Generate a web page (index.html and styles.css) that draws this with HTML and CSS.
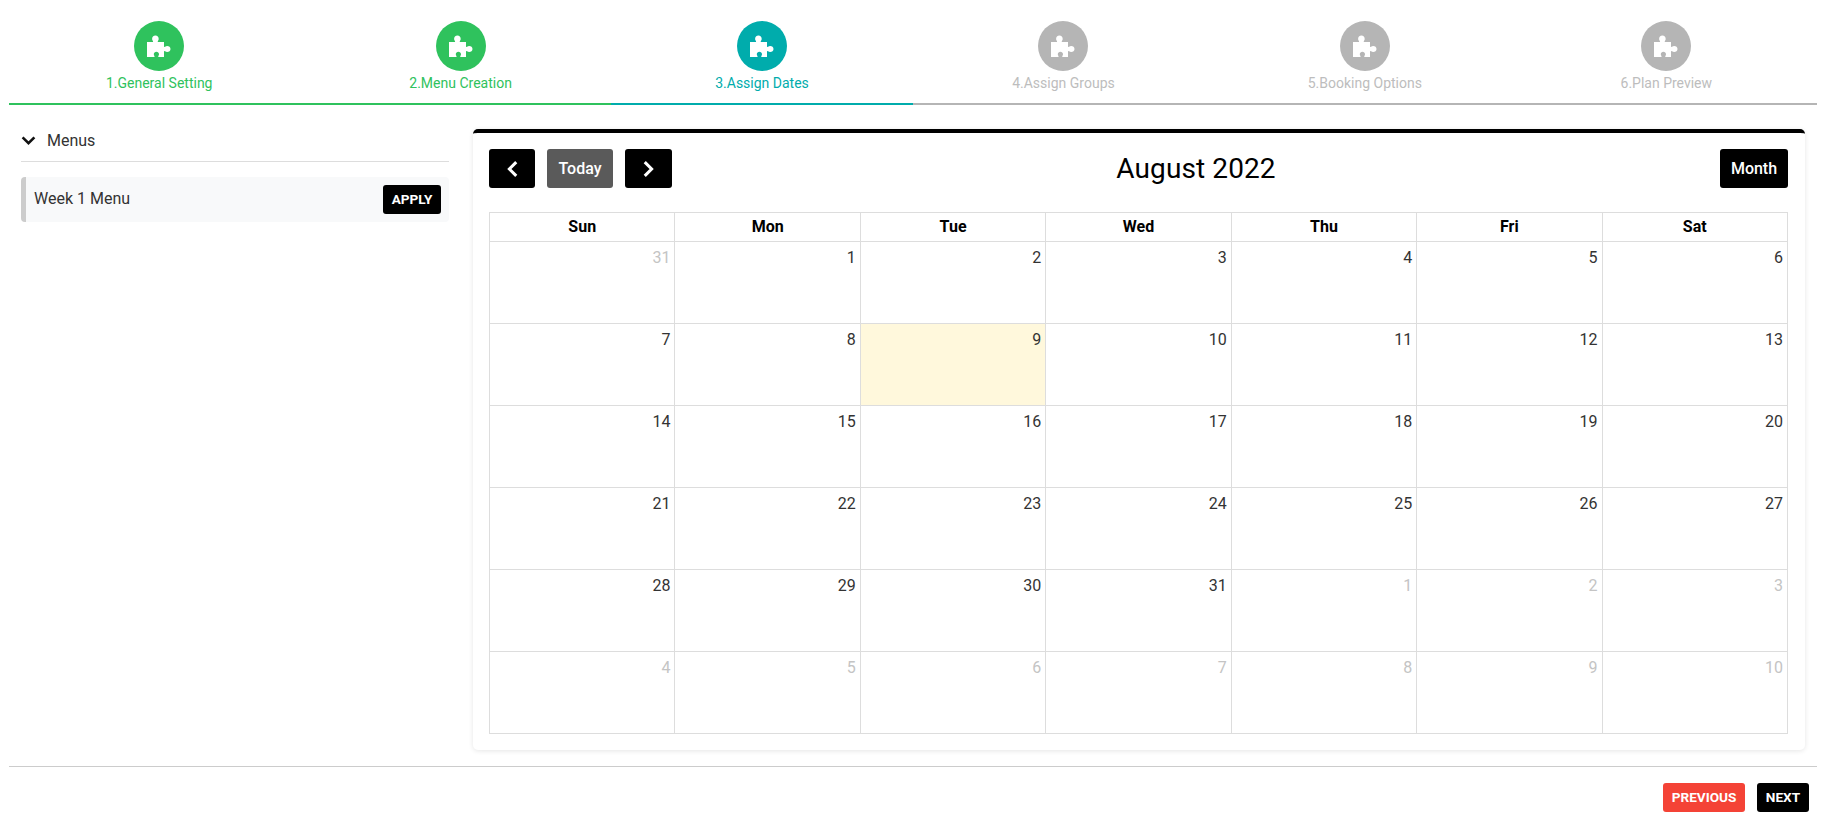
FILE: index.html
```html
<!DOCTYPE html>
<html lang="en">
<head>
  <meta charset="UTF-8" />
  <title>Assign Dates</title>
  <link rel="stylesheet" href="styles.css">
</head>
<body>
  <svg class="defs" width="0" height="0">
    <symbol id="puzzle" viewBox="0 0 24 22">
      <path fill="#fff" d="M0 7h5.400c.7 0 .9-.5.5-1.100-.5-.6-.8-1.200-.8-2C5.100 1.800 6.400.5 8.400.5s3.300 1.300 3.300 3.400c0 .8-.3 1.400-.8 2-.4.6-.2 1.100.5 1.100H17v4.300c0 .7.500.9 1.100.5.600-.5 1.200-.8 2-.8 2 0 3.400 1.100 3.400 3s-1.400 3-3.400 3c-.8 0-1.400-.3-2-.8-.6-.4-1.100-.2-1.100.5V22h-5.100c-.7 0-.9-.5-.5-1.100.4-.5.600-1 .6-1.600 0-1.500-1.200-2.500-2.600-2.500s-2.600 1-2.600 2.500c0 .6.200 1.100.6 1.600.4.600.2 1.100-.5 1.100H0z"/>
    </symbol>
  </svg>

  <div class="steps">
    <div class="step done"><span class="circle"><svg><use href="#puzzle"/></svg></span><span class="label">1.General Setting</span></div>
    <div class="step done"><span class="circle"><svg><use href="#puzzle"/></svg></span><span class="label">2.Menu Creation</span></div>
    <div class="step active"><span class="circle"><svg><use href="#puzzle"/></svg></span><span class="label">3.Assign Dates</span></div>
    <div class="step"><span class="circle"><svg><use href="#puzzle"/></svg></span><span class="label">4.Assign Groups</span></div>
    <div class="step"><span class="circle"><svg><use href="#puzzle"/></svg></span><span class="label">5.Booking Options</span></div>
    <div class="step"><span class="circle"><svg><use href="#puzzle"/></svg></span><span class="label">6.Plan Preview</span></div>
  </div>

  <div class="content">
    <aside class="menus">
      <div class="menus-head">
        <svg class="chev" viewBox="0 0 14 10"><path d="M1.500 2l5.500 5.500L12.500 2" fill="none" stroke="#111" stroke-width="2.400"/></svg>
        <span>Menus</span>
      </div>
      <div class="menu-item">
        <span class="menu-name">Week 1 Menu</span>
        <button class="btn-apply">APPLY</button>
      </div>
    </aside>

    <section class="cal-card">
      <div class="toolbar">
        <div class="tb-left">
          <button class="tb-btn nav prev-nav"><svg viewBox="0 0 12 16"><path d="M9 2.500L3.500 8 9 13.500" fill="none" stroke="#fff" stroke-width="2.400"/></svg></button>
          <button class="tb-btn today">Today</button>
          <button class="tb-btn nav"><svg viewBox="0 0 12 16"><path d="M3 2.500L8.500 8 3 13.500" fill="none" stroke="#fff" stroke-width="2.400"/></svg></button>
        </div>
        <h2 class="cal-title">August 2022</h2>
        <button class="tb-btn month">Month</button>
      </div>
      <div class="cal-grid" id="grid"></div>
    </section>
  </div>

  <div class="footer">
    <button class="btn-foot prev">PREVIOUS</button>
    <button class="btn-foot next">NEXT</button>
  </div>

  <script>
    const grid = document.getElementById("grid");
    ["Sun", "Mon", "Tue", "Wed", "Thu", "Fri", "Sat"].forEach(d => {
      const head = document.createElement("div");
      head.className = "cal-head";
      head.textContent = d;
      grid.appendChild(head);
    });
    const days = [31];
    for (let i = 1; i <= 31; i++) days.push(i);
    for (let i = 1; i <= 10; i++) days.push(i);
    days.forEach((n, i) => {
      const cell = document.createElement("div");
      cell.className = "cal-day";
      if (i === 0 || i > 31) cell.classList.add("other");
      if (i === 9) cell.classList.add("today-cell");
      cell.textContent = n;
      grid.appendChild(cell);
    });
  </script>
</body>
</html>
```

FILE: styles.css
```css
* {
  box-sizing: border-box;
}

body {
  margin: 0;
  padding: 0 14px 0 9px;
  background: #fff;
  font-family: Roboto, sans-serif;
  color: #333;
}

button {
  font-family: inherit;
  border: 0;
  cursor: pointer;
}

.defs {
  display: block;
  height: 0;
}

.steps {
  display: grid;
  grid-template-columns: repeat(6, 1fr);
  height: 105px;
  margin-left: -0.5px;
  padding-top: 21px;
}

.step {
  display: flex;
  flex-direction: column;
  align-items: center;
  border-bottom: 2px solid #b5b5b5;
  color: #bdbdbd;
}

.circle {
  width: 50px;
  height: 50px;
  border-radius: 50%;
  background: #b5b5b5;
  display: flex;
  align-items: center;
  justify-content: center;
}

.circle svg {
  width: 24px;
  height: 22px;
}

.label {
  font-size: 14px;
  line-height: 16px;
  margin-top: 4px;
}

.step.done {
  border-color: #2fc25d;
  color: #2fc25d;
}

.step.done .circle {
  background: #2fc25d;
}

.step.active {
  border-color: #00acac;
  color: #00acac;
}

.step.active .circle {
  background: #00acac;
}

.content {
  display: flex;
  gap: 24px;
  padding: 14px 12px 16px 0;
  border-bottom: 1px solid #ccc;
}

.menus {
  width: 440px;
  flex: none;
  padding-left: 12px;
}

.menus-head {
  display: flex;
  align-items: center;
  gap: 11px;
  height: 43px;
  font-size: 16px;
  border-bottom: 1px solid #ddd;
}

.chev {
  width: 15px;
  height: 11px;
}

.menu-item {
  display: flex;
  align-items: center;
  justify-content: space-between;
  height: 45px;
  margin-top: 15px;
  padding: 0 8px;
  background: #f8f9fa;
  border-left: 5px solid #ccc;
  border-radius: 4px;
  font-size: 16px;
}

.menu-name {
  margin-bottom: 2px;
}

.btn-apply {
  background: #000;
  color: #fff;
  font-size: 13.6px;
  font-weight: 700;
  height: 29px;
  width: 58px;
  padding: 0 0 2px;
  border-radius: 3px;
}

.cal-card {
  flex: 1;
  margin-top: 10px;
  padding: 16px 17px 16px 16px;
  background: #fff;
  border-top: 4px solid #000;
  border-radius: 5px;
  box-shadow: 0 1px 5px rgba(0, 0, 0, 0.1);
}

.toolbar {
  display: flex;
  align-items: center;
  justify-content: space-between;
  height: 39px;
  margin-bottom: 24px;
}

.tb-left {
  display: flex;
  gap: 12px;
}

.tb-btn {
  height: 39px;
  background: #000;
  color: #fff;
  font-size: 16px;
  font-weight: 500;
  border-radius: 3px;
  padding: 0;
}

.tb-btn.nav {
  width: 47px;
}

.tb-btn.prev-nav {
  width: 46px;
}

.tb-btn.nav svg {
  width: 15px;
  height: 20px;
  display: block;
  margin: auto;
}

.tb-btn.today {
  background: #5a5a5a;
  width: 66px;
}

.tb-btn.month {
  width: 68px;
}

.cal-title {
  margin: 0;
  font-size: 28px;
  font-weight: 400;
  letter-spacing: 0.1px;
  color: #000;
}

.cal-grid {
  display: grid;
  grid-template-columns: repeat(7, 1fr);
  grid-template-rows: 29px repeat(6, 82px);
  border-top: 1px solid #ddd;
  border-left: 1px solid #ddd;
}

.cal-head,
.cal-day {
  border-right: 1px solid #ddd;
  border-bottom: 1px solid #ddd;
}

.cal-head {
  text-align: center;
  font-size: 16px;
  font-weight: 700;
  color: #000;
  line-height: 28px;
}

.cal-day {
  text-align: right;
  font-size: 16px;
  padding: 6px 4px;
  color: #333;
}

.cal-day.other {
  color: #c4c4c4;
}

.cal-day.today-cell {
  background: #fff8dc;
}

.footer {
  display: flex;
  justify-content: flex-end;
  gap: 12px;
  padding: 16px 8px 0 0;
}

.btn-foot {
  height: 29px;
  padding: 0 0 2px;
  color: #fff;
  font-size: 13.6px;
  font-weight: 700;
  border-radius: 3px;
}

.prev {
  background: #f44336;
  width: 82px;
}

.next {
  background: #000;
  width: 52px;
}
```
